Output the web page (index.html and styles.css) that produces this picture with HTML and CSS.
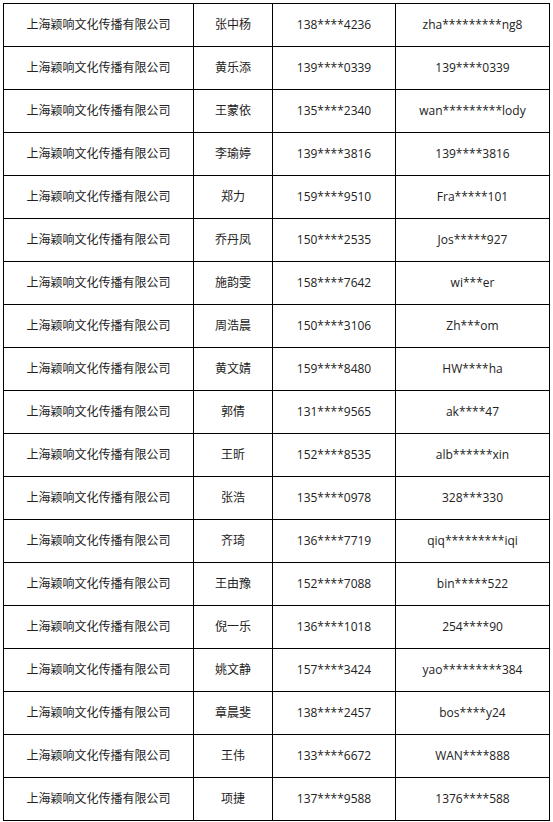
FILE: index.html
```html
<!DOCTYPE html>
<html lang="zh-CN">
<head>
<meta charset="utf-8">
<title>名单</title>
<link rel="stylesheet" href="styles.css">
</head>
<body>
<table class="list">
  <colgroup>
    <col class="c-company">
    <col class="c-name">
    <col class="c-phone">
    <col class="c-account">
  </colgroup>
  <tbody>
    <tr><td>上海颖响文化传播有限公司</td><td>张中杨</td><td>138****4236</td><td>zha*********ng8</td></tr>
    <tr><td>上海颖响文化传播有限公司</td><td>黄乐添</td><td>139****0339</td><td>139****0339</td></tr>
    <tr><td>上海颖响文化传播有限公司</td><td>王蒙依</td><td>135****2340</td><td>wan*********lody</td></tr>
    <tr><td>上海颖响文化传播有限公司</td><td>李瑜婷</td><td>139****3816</td><td>139****3816</td></tr>
    <tr><td>上海颖响文化传播有限公司</td><td>郑力</td><td>159****9510</td><td>Fra*****101</td></tr>
    <tr><td>上海颖响文化传播有限公司</td><td>乔丹凤</td><td>150****2535</td><td>Jos*****927</td></tr>
    <tr><td>上海颖响文化传播有限公司</td><td>施韵雯</td><td>158****7642</td><td>wi***er</td></tr>
    <tr><td>上海颖响文化传播有限公司</td><td>周浩晨</td><td>150****3106</td><td>Zh***om</td></tr>
    <tr><td>上海颖响文化传播有限公司</td><td>黄文婧</td><td>159****8480</td><td>HW****ha</td></tr>
    <tr><td>上海颖响文化传播有限公司</td><td>郭倩</td><td>131****9565</td><td>ak****47</td></tr>
    <tr><td>上海颖响文化传播有限公司</td><td>王昕</td><td>152****8535</td><td>alb******xin</td></tr>
    <tr><td>上海颖响文化传播有限公司</td><td>张浩</td><td>135****0978</td><td>328***330</td></tr>
    <tr><td>上海颖响文化传播有限公司</td><td>齐琦</td><td>136****7719</td><td>qiq*********iqi</td></tr>
    <tr><td>上海颖响文化传播有限公司</td><td>王由豫</td><td>152****7088</td><td>bin*****522</td></tr>
    <tr><td>上海颖响文化传播有限公司</td><td>倪一乐</td><td>136****1018</td><td>254****90</td></tr>
    <tr><td>上海颖响文化传播有限公司</td><td>姚文静</td><td>157****3424</td><td>yao*********384</td></tr>
    <tr><td>上海颖响文化传播有限公司</td><td>章晨斐</td><td>138****2457</td><td>bos****y24</td></tr>
    <tr><td>上海颖响文化传播有限公司</td><td>王伟</td><td>133****6672</td><td>WAN****888</td></tr>
    <tr><td>上海颖响文化传播有限公司</td><td>项捷</td><td>137****9588</td><td>1376****588</td></tr>
  </tbody>
</table>
</body>
</html>
```
FILE: styles.css
```css
html, body {
  margin: 0;
  padding: 0;
  background: #fff;
}
body {
  padding: 3px 0 0 3px;
  font-family: "Open Sans", "Noto Sans CJK SC", sans-serif;
  font-size: 12px;
  color: #222;
}
.list {
  border-collapse: separate;
  border-spacing: 0;
  table-layout: fixed;
  width: 547px;
  border-top: 1px solid #000;
  border-left: 1px solid #000;
}
.c-company { width: 190px; }
.c-name { width: 79px; }
.c-phone { width: 123px; }
.c-account { width: 154px; }
.list tr { height: 43px; }
.list td {
  border-right: 1px solid #000;
  border-bottom: 1px solid #000;
  padding: 0;
  text-align: center;
  vertical-align: middle;
  white-space: nowrap;
  line-height: 16px;
}
```
